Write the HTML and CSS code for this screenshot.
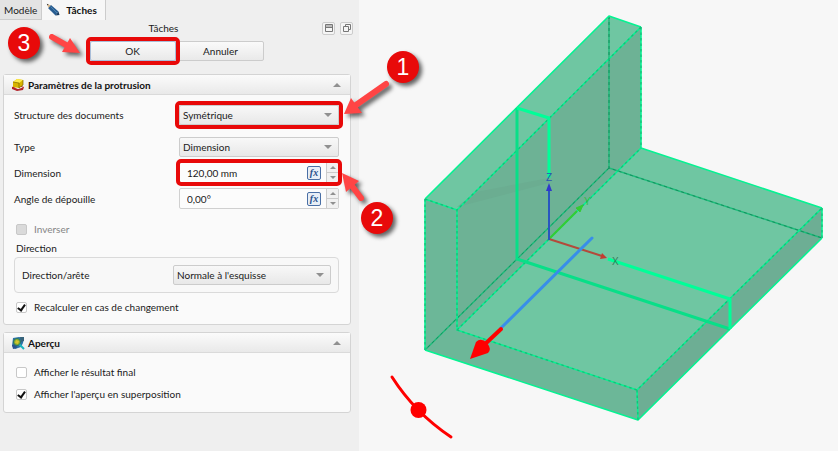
FILE: index.html
```html
<!DOCTYPE html>
<html lang="fr">
<head>
<meta charset="utf-8">
<title>Tâches</title>
<link rel="stylesheet" href="styles.css">
</head>
<body>
<div class="app">
  <aside class="panel">
    <nav class="tabs">
      <button type="button" class="tab">Modèle</button>
      <button type="button" class="tab tab-active">
        <svg width="14" height="14" viewBox="0 0 14 14" aria-hidden="true">
          <path d="M1 1L5 2.500 2.500 5z" fill="#d8b98c"/><path d="M.8.800L2.600 1.500 1.500 2.600z" fill="#222"/>
          <path d="M5 2L12.500 8.500 9.500 12.500 2.200 5.200z" fill="#285d91"/>
          <path d="M4.500 3.500L11 10" stroke="#4d82b0" stroke-width="1"/>
          <path d="M12.500 8.500L13.500 12 9.500 12.500z" fill="#173b60"/>
        </svg>
        Tâches
      </button>
    </nav>
    <header class="title-bar">
      <h1>Tâches</h1>
      <div class="window-tools">
        <button type="button" class="tool" aria-label="Réduire">
          <svg width="10" height="10" viewBox="0 0 10 10"><path d="M1.500 1.500h7v7h-7zM1.500 4.500h7" fill="none" stroke="#777"/><path d="M2 2h6v2H2z" fill="#bbb"/></svg>
        </button>
        <button type="button" class="tool" aria-label="Détacher">
          <svg width="10" height="10" viewBox="0 0 10 10"><path d="M3.500 3.500v-2h5v5h-2M1.500 3.500h5v5h-5z" fill="none" stroke="#777"/></svg>
        </button>
      </div>
    </header>
    <div class="actions">
      <div class="marked"><button type="button" class="btn btn-default">OK</button></div>
      <button type="button" class="btn">Annuler</button>
    </div>

    <section class="group">
      <header class="group-head">
        <svg width="14" height="14" viewBox="0 0 14 14" aria-hidden="true">
          <path d="M1 9l6-2 6 2-1 3-6 1-5-2z" fill="#b3242b"/>
          <path d="M3 9.500l5-1 4 1-5 1.500z" fill="#fff"/>
          <path d="M2 4l4-3 6 1v5l-4 3-6-1z" fill="#d8b400"/>
          <path d="M2 4l4-3 6 1-4 3z" fill="#ffec4a"/>
          <path d="M2 4l6 1v5l4-3V2" fill="none" stroke="#7d6500" stroke-width=".7"/>
        </svg>
        <h2>Paramètres de la protrusion</h2>
        <span class="arrow arrow-up"></span>
      </header>
      <div class="group-body form">
        <div class="row row-spaced">
          <label for="structure">Structure des documents</label>
          <div class="field marked"><select id="structure"><option>Symétrique</option></select><span class="arrow"></span></div>
        </div>
        <div class="row">
          <label for="type">Type</label>
          <div class="field"><select id="type"><option>Dimension</option></select><span class="arrow"></span></div>
        </div>
        <div class="row">
          <label for="dimension">Dimension</label>
          <div class="field spin marked">
            <input id="dimension" type="text" value="120,00 mm">
            <button type="button" class="fx">fx</button>
            <div class="steps"><button type="button" aria-label="Augmenter"><span class="arrow arrow-up"></span></button><button type="button" aria-label="Diminuer"><span class="arrow"></span></button></div>
          </div>
        </div>
        <div class="row">
          <label for="angle">Angle de dépouille</label>
          <div class="field spin">
            <input id="angle" type="text" value="0,00°">
            <button type="button" class="fx">fx</button>
            <div class="steps"><button type="button" aria-label="Augmenter"><span class="arrow arrow-up"></span></button><button type="button" aria-label="Diminuer"><span class="arrow"></span></button></div>
          </div>
        </div>
        <label class="check check-first"><input type="checkbox" disabled> Inverser</label>
        <fieldset>
          <legend>Direction</legend>
          <div class="box">
            <label for="edge">Direction/arête</label>
            <div class="field"><select id="edge"><option>Normale à l'esquisse</option></select><span class="arrow"></span></div>
          </div>
        </fieldset>
        <label class="check"><input type="checkbox" checked> Recalculer en cas de changement</label>
      </div>
    </section>

    <section class="group">
      <header class="group-head">
        <svg width="14" height="14" viewBox="0 0 14 14" aria-hidden="true">
          <path d="M2 2l6-1 5 1-1 5-2 4-6 2-3-3z" fill="#2b72a8"/>
          <path d="M1 9l4-1 1 4-4 1z" fill="#29518c"/>
          <path d="M9 1h4v4l-3 1z" fill="#37637a"/>
          <circle cx="6" cy="6" r="3.500" fill="#8fae2b" stroke="#22736b"/>
          <path d="M5 4l3 1-1 3-3-1z" fill="#d4c52e"/>
          <path d="M8.500 8.500L13 13" stroke="#19b5bd" stroke-width="2"/>
        </svg>
        <h2>Aperçu</h2>
        <span class="arrow arrow-up"></span>
      </header>
      <div class="group-body preview">
        <label class="check"><input type="checkbox"> Afficher le résultat final</label>
        <label class="check"><input type="checkbox" checked> Afficher l'aperçu en superposition</label>
      </div>
    </section>
  </aside>

  <main class="view">
    <svg class="scene" viewBox="359 0 479 451" role="img" aria-label="Vue 3D">
      <path d="M425 199L609 16 641 27V148L822 208V238L638 420 425 350z" fill="#6fc6a2"/>
      <path d="M457 210L641 27V148L457 330z" fill="#6db295"/>
      <path d="M425 199L457 210V330L637 390 638 420 425 350z" fill="#6cb798"/>
      <path d="M637 390L822 208V238L638 420z" fill="#6dae94"/>
      <path d="M457 207L476 192 549 178V183z" fill="#6bad91"/>
      <g fill="none" stroke="#1bbd7a" stroke-width="1.400">
        <path d="M609 16V168L822 238M609 168L425 350"/>
        <path d="M609 16V168L822 238M609 168L425 350" stroke="#168f5f" stroke-width="1" stroke-dasharray="3 3"/>
      </g>
      <g fill="none" stroke="#05f392" stroke-width="1.600" stroke-linejoin="round">
        <path d="M425 199L609 16 641 27M641 148L822 208M822 238L638 420 425 350"/>
        <path d="M641 27V148M822 208V238M425 199V350M425 199L457 210M641 27L457 210V330L637 390 822 208M637 390L638 420M457 330L641 148"/>
        <path d="M641 27V148M822 208V238M425 199V350M425 199L457 210M641 27L457 210V330L637 390 822 208M637 390L638 420M457 330L641 148" stroke="#18ba78" stroke-width="1.200" stroke-dasharray="2.500 3"/>
      </g>
      <g fill="none" stroke-linejoin="round">
        <path d="M517 108V259L730 329" stroke="#08df88" stroke-width="3"/>
        <path d="M517 108L549 118V178M608 259L730 299V329" stroke="#00ff98" stroke-width="3"/>
      </g>
      <path d="M549 239L577 211" stroke="#3c3" stroke-width="2"/><path d="M583 205L580 212 576 208z" fill="#3c3" stroke="#3c3"/>
      <path d="M549 239L602 256" stroke="#b34a3b" stroke-width="2"/><path d="M607 258L600 259 602 253z" fill="#c43c31"/>
      <path d="M549 240V188" stroke="#2856c0" stroke-width="2"/><path d="M549 183L552 191H546z" fill="#3038cc"/>
      <g class="axis"><text x="546" y="181" fill="#2953b4">Z</text><text x="584" y="205" fill="#35ba45">Y</text><text x="612" y="265" fill="#357c58">X</text></g>
      <path d="M592 238L501 328" stroke="#388ee9" stroke-width="3" stroke-linecap="round"/>
      <path d="M501 329L483 346" stroke="red" stroke-width="4" stroke-linecap="round"/>
      <path d="M470 359L476 342Q481 337 487 343 492 349 488 353z" fill="red"/>
      <path d="M392 377Q415 413 451 437" fill="none" stroke="red" stroke-width="3" stroke-linecap="round"/>
      <circle cx="418.500" cy="410" r="8" fill="red"/>
    </svg>
  </main>

  <svg class="callouts" width="838" height="451" viewBox="0 0 838 451" aria-hidden="true">
    <g class="shadow" fill="#ff4545" stroke="#ff4545">
      <path d="M52 37L68 46" stroke-width="6" stroke-linecap="round"/><path d="M80 53L70 38 62 52z" stroke="none"/>
      <path d="M386 84L356 105" stroke-width="6" stroke-linecap="round"/><path d="M344 114L351 98 362 113z" stroke="none"/>
      <path d="M361 198L352 186" stroke-width="6" stroke-linecap="round"/><path d="M342 173L359 181 346 192z" stroke="none"/>
    </g>
    <g class="shadow" fill="#e80a0a"><circle cx="24" cy="43" r="16"/><circle cx="403" cy="67" r="16"/><circle cx="377" cy="218" r="16"/></g>
    <g class="digits"><text x="24" y="51">3</text><text x="403" y="75">1</text><text x="377" y="226">2</text></g>
  </svg>
</div>
</body>
</html>
```
FILE: styles.css
```css
* { box-sizing: border-box; }
body { margin: 0; background: #f7f7f7; color: #1a1a1a; font: 10px/14px Lato, "Noto Sans", sans-serif; }
button, input, select { font: inherit; color: inherit; margin: 0; padding: 0; }
h1, h2 { margin: 0; font-size: 10px; line-height: 14px; }
h1 { font-weight: 400; }
svg { display: block; flex: none; }

.app { position: relative; display: flex; min-height: 100vh; overflow: hidden; }
.panel { flex: 0 0 359px; min-width: 0; padding-right: 8px; background: #efefef; }
.view { flex: 1; min-width: 0; background: #f7f7f7; }
.scene { width: 100%; height: auto; }
.axis { font: 10px "Liberation Sans", sans-serif; }

.tabs { display: flex; align-items: flex-start; height: 20px; }
.tab { height: 20px; padding: 0 4px; border: 1px solid #ccc; border-width: 0 1px 1px 0; background: #e3e3e3; }
.tab-active { display: flex; align-items: center; gap: 6px; padding: 0 8px 0 4px; border-bottom: 0; background: #f7f7f7; color: #111; font-weight: 700; }

.title-bar { display: grid; grid-template-columns: 1fr auto 1fr; align-items: center; height: 16px; padding-left: 4px; }
.title-bar h1 { grid-column: 2; padding-right: 28px; }
.window-tools { display: flex; justify-content: flex-end; gap: 5px; margin-right: -2px; }
.tool { display: grid; place-items: center; width: 13px; height: 13px; border: 1px solid #ccc; border-radius: 2px; background: #f5f5f5; }

.actions { display: flex; justify-content: center; gap: 2px; padding: 5px 0 13px 2px; }
.btn { display: block; width: 86px; height: 20px; border: 1px solid #ccc; border-radius: 2px; background: linear-gradient(#fafafa, #e9e9e9); }
.btn-default { border-color: #a9bdd8; }

.marked { position: relative; }
.marked::after { content: ""; position: absolute; inset: -4px; border: 4px solid #e80909; border-radius: 5px; pointer-events: none; }

.group { margin: 0 0 7px 3px; border: 1px solid #d4d4d4; border-radius: 3px; background: #fafafa; }
.group-head { display: flex; align-items: center; gap: 3px; height: 20px; padding: 0 9px 0 7px; border-bottom: 1px solid #dadada; background: linear-gradient(#fbfbfb, #e9e9e9); color: #111; }
.group-head h2 { flex: 1; }
.group-body { padding: 0 11px 7px 10px; }
.form { padding-top: 10px; }

.arrow { flex: none; width: 0; height: 0; border: 4px solid transparent; border-top-color: #909090; border-bottom: 0; pointer-events: none; }
.arrow-up { border-top: 0; border-bottom: 4px solid #909090; }

.row { display: grid; grid-template-columns: 165px minmax(0, 1fr); align-items: center; margin-bottom: 5px; }
.row-spaced { margin-bottom: 12px; }
.field { display: grid; align-items: center; min-width: 0; }
.field > select, .field > .arrow { grid-area: 1 / 1; }
.field > .arrow { justify-self: end; margin-right: 7px; }
select { width: 100%; height: 20px; padding: 0 3px; border: 1px solid #ccc; border-radius: 2px; appearance: none; background: linear-gradient(#f8f8f8, #e8e8e8); }

.spin { display: flex; height: 21px; border: 1px solid #d0d0d0; border-radius: 2px; background: #fcfcfc; }
.spin input { flex: 1; width: 0; min-width: 0; padding-left: 7px; border: 0; outline: 0; background: none; }
.fx { width: 14px; height: 14px; margin-right: 5px; border: 1px solid #4a6fa5; border-radius: 2px; background: #e8eef6; color: #27508c; font: italic bold 10px/10px "Liberation Serif", serif; }
.steps { display: grid; align-self: stretch; width: 12px; border-left: 1px solid #ccc; }
.steps button { display: grid; place-items: center; border: 0; background: #f1f1f1; }
.steps button + button { border-top: 1px solid #ccc; }
.steps .arrow { border-left-width: 3px; border-right-width: 3px; border-top-width: 3px; }
.steps .arrow-up { border-top-width: 0; border-bottom-width: 3px; }

.check { display: flex; align-items: center; gap: 7px; height: 20px; padding-left: 2px; }
.check-first { margin-top: 10px; }
.check:has(:disabled) { color: #858585; }
.check input { width: 11px; height: 11px; border: 1px solid #c8c8c8; border-radius: 2px; appearance: none; background: #fff; }
.check input:disabled { background: #dadada; }
.check input:checked { display: grid; place-items: center; }
.check input:checked::after { content: ""; width: 3px; height: 6px; border: solid #111; border-width: 0 2px 2px 0; transform: rotate(35deg); }

fieldset { min-width: 0; margin: 0 0 4px; padding: 0; border: 0; }
legend { height: 18px; padding: 2px; }
.box { display: grid; grid-template-columns: 151px minmax(0, 1fr); align-items: center; height: 36px; padding: 0 7px; border: 1px solid #dadada; border-radius: 4px; background: #f8f8f8; }

.preview { padding-top: 9px; padding-bottom: 8px; }
.preview .check + .check { margin-top: 2px; }

.callouts { position: absolute; top: 0; left: 0; pointer-events: none; }
.shadow { filter: drop-shadow(3px 3px 2px rgb(0 0 0 / .6)); }
.digits { fill: #fff; font: 23px "Liberation Sans", sans-serif; text-anchor: middle; }
```
